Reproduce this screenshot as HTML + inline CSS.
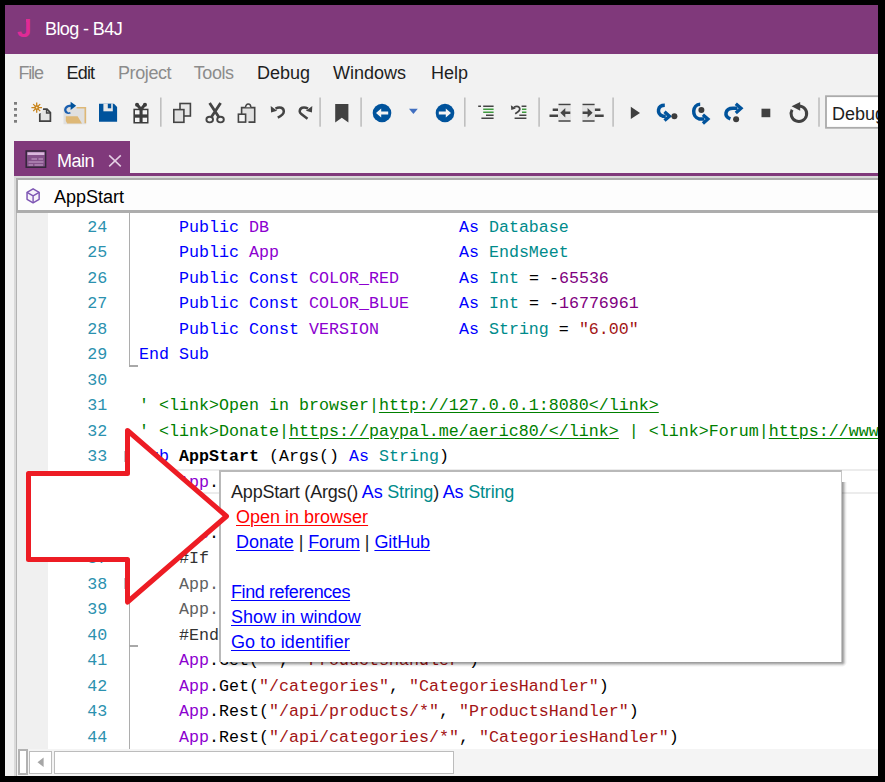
<!DOCTYPE html>
<html><head><meta charset="utf-8"><title>Blog - B4J</title>
<style>
html,body{margin:0;padding:0;background:#000;}
body{width:885px;height:782px;overflow:hidden;position:relative;font-family:"Liberation Sans",sans-serif;}
#win{position:absolute;left:5px;top:5px;width:873px;height:771px;background:#f2f2f2;overflow:hidden;}
.abs{position:absolute;}
.t{position:absolute;white-space:pre;font-size:18px;line-height:21px;color:#1e1e1e;}
#title{left:0;top:0;width:873px;height:49px;background:#80397b;}
.g{color:#8c8c8c;}
#tab{left:9px;top:136px;width:116px;height:33px;background:#80397b;}
#pline{left:9px;top:168px;width:864px;height:3px;background:#80397b;}
#frame{left:9px;top:171px;width:864px;height:600px;background:#dadada;}
#combo{left:11px;top:173px;width:862px;height:35px;background:#adadad;}
#comboin{left:13px;top:175px;width:860px;height:30px;background:#fdfdfd;}
#ed{left:12px;top:208px;width:861px;height:536px;background:#fff;overflow:hidden;}
#lb{left:11px;top:208px;width:1px;height:563px;background:#b4b4b4;}
#gut{left:0;top:0;width:31px;height:536px;background:#f0f0f0;}
.ln,.cl{position:absolute;white-space:pre;font-family:"Liberation Mono",monospace;font-size:16.667px;line-height:25.5px;height:25.5px;}
.ln{left:58.3px;width:32px;text-align:right;color:#2b91af;}
.cl{left:122px;color:#000;}
.k{color:#0000ff}.v{color:#8c00cf}.ty{color:#008b8b}.n{color:#800080}.s{color:#a31515}.c{color:#008000}.u{text-decoration:underline;text-underline-offset:2px}.d{color:#606060}.dd{color:#333}
b{font-weight:700;color:#000}
#hs{left:12px;top:744px;width:861px;height:27px;background:#f4f4f4;}
#pop{left:214px;top:465px;width:620px;height:189.5px;background:#fff;border:2px solid #b9b9b9;border-right:1px solid #c6c6c6;border-bottom:0;}
.pl{position:absolute;white-space:pre;font-size:18px;line-height:25px;height:25px;color:#1e1e1e;}
.pl a{color:#0000ff;text-decoration:underline;text-underline-offset:1.5px;text-decoration-thickness:1px}
.pl a.r{color:#ff0000}
</style></head><body>
<div id="win">
 <div id="title" class="abs"></div>
 <div class="t" style="left:12px;top:7.5px;font-size:26px;line-height:30px;font-weight:700;color:#df2a96">J</div>
 <div class="abs" style="left:10px;top:11px;width:11.2px;height:11px;background:#80397b"></div>
 <div class="t" style="left:40px;top:13.7px;color:#fff;letter-spacing:-0.6px">Blog - B4J</div>
 <!-- menu -->
 <div class="t g" style="left:13.5px;top:57.8px;letter-spacing:-1.2px">File</div>
 <div class="t" style="left:61.5px;top:57.8px;letter-spacing:-0.8px">Edit</div>
 <div class="t g" style="left:113px;top:57.8px;letter-spacing:-0.4px">Project</div>
 <div class="t g" style="left:188.7px;top:57.8px;letter-spacing:-0.4px">Tools</div>
 <div class="t" style="left:252px;top:57.8px">Debug</div>
 <div class="t" style="left:328px;top:57.8px">Windows</div>
 <div class="t" style="left:426px;top:57.8px">Help</div>
 <!-- toolbar placeholder -->
 <!-- tab -->
 <div id="tab" class="abs"></div>
 <div id="pline" class="abs"></div>
 <div class="t" style="left:52px;top:146px;color:#fff;letter-spacing:-0.5px">Main</div>
 <div id="frame" class="abs"></div>
 <div id="combo" class="abs"></div>
 <div id="comboin" class="abs"></div>
 <svg id="icons" class="abs" style="left:-5px;top:-5px" width="885" height="215" viewBox="0 0 885 215">
  <!-- grip -->
  <g fill="#7d7d7d"><rect x="14" y="102" width="3" height="2.7"/><rect x="14" y="108" width="3" height="2.7"/><rect x="14" y="114" width="3" height="2.7"/><rect x="14" y="120" width="3" height="2.7"/></g>
  <!-- new -->
  <path d="M39.8 109.2H47l3.4 3.4v8.6H39.8z" fill="#e4e4e4" stroke="#424242" stroke-width="1.7" stroke-linejoin="miter"/>
  <path d="M46.6 109.2v3.8h3.8" fill="none" stroke="#424242" stroke-width="1.5"/>
  <circle cx="36.7" cy="107.6" r="6.6" fill="#f2f2f2"/>
  <g stroke="#c8841c" stroke-width="1.3" fill="none"><path d="M31.4 107.6H42M36.7 102.4V112.8M33.2 104.1l7 7M40.2 104.1l-7 7"/></g>
  <circle cx="36.7" cy="107.6" r="2.4" fill="#c8841c"/><circle cx="36.7" cy="107.6" r="0.9" fill="#f6e2c0"/>
  <!-- open -->
  <rect x="63.5" y="107" width="22.8" height="17.3" fill="#e0e0e0"/>
  <path d="M76.6 107.8H85.3V123.2" fill="none" stroke="#deb877" stroke-width="1.6"/>
  <path d="M65.8 116.2H77.6L82 123.5H67.2L65.8 121z" fill="#deb877"/>
  <path d="M66.8 112.6c-3-2.6-1.6-6.8 4.6-6.9" fill="none" stroke="#1a5fb0" stroke-width="2.2"/>
  <path d="M70.6 101.8l5.6 4-5.6 4.2z" fill="#00539c"/>
  <path d="M66 112.2c1.2 1 3 1.2 4.4.6" fill="none" stroke="#1a5fb0" stroke-width="1.6"/>
  <!-- save -->
  <path d="M99 103.8H114L117.1 107V121.8H99z" fill="#00539c"/>
  <rect x="103.4" y="103.8" width="9.4" height="7.5" fill="#e8e8e8"/>
  <rect x="107.8" y="103.8" width="3.4" height="4.5" fill="#00539c"/>
  <!-- gift -->
  <rect x="133.4" y="108.7" width="15.1" height="14.8" fill="#3d3d3d"/>
  <g fill="#f4f4f4"><rect x="135" y="110.2" width="4.5" height="4.2"/><rect x="142.6" y="110.2" width="4.5" height="4.2"/><rect x="135" y="117.7" width="4.5" height="4.3"/><rect x="142.6" y="117.7" width="4.5" height="4.3"/></g>
  <path d="M141 109.5l-3.6-4.6M141 109.5l3.600-4.600" stroke="#3d3d3d" stroke-width="3" fill="none" stroke-linecap="round"/>
  <circle cx="137" cy="104.8" r="2" fill="#3d3d3d"/><circle cx="145" cy="104.8" r="2" fill="#3d3d3d"/>
  <!-- sep -->
  <g fill="#bfbfbf"><rect x="160" y="97.5" width="1.6" height="29.2"/><rect x="319.3" y="97.5" width="1.6" height="29.2"/><rect x="360.3" y="97.5" width="1.6" height="29.2"/><rect x="464" y="97.5" width="1.6" height="29.2"/><rect x="538.3" y="97.5" width="1.6" height="29.2"/><rect x="612.3" y="97.5" width="1.6" height="29.2"/><rect x="818.2" y="97.5" width="1.6" height="29.2"/></g>
  <!-- copy -->
  <rect x="180" y="103.5" width="10.4" height="12.5" fill="#e8e8e8" stroke="#444" stroke-width="1.6"/>
  <rect x="173.8" y="109.6" width="10.1" height="12.7" fill="#e2e2e2" stroke="#444" stroke-width="1.6"/>
  <!-- cut -->
  <g fill="none" stroke="#444" stroke-width="1.9"><path d="M209.600 103L218.800 117M220.600 103L211.400 117" stroke-width="2.800"/><ellipse cx="209.700" cy="119.600" rx="3.300" ry="2.800"/><ellipse cx="220.500" cy="119.600" rx="3.300" ry="2.800"/></g>
  <!-- paste -->
  <path d="M241.6 122.1V107.6H254.7V122.1H248.5" fill="#e2e2e2" stroke="#444" stroke-width="1.6"/>
  <path d="M245.6 107.2a2.6 3.2 0 0 1 5.2 0" fill="#f4f4f4" stroke="#444" stroke-width="1.5"/>
  <rect x="238.4" y="114.2" width="7.2" height="7.9" fill="#f4f4f4" stroke="#444" stroke-width="1.6"/>
  <!-- undo -->
  <path d="M275.5 108.6c4.5-2.6 8.300-0.600 8.300 2.800c0 2.500-2.500 4.400-6 6.300" fill="none" stroke="#444" stroke-width="2.5"/>
  <path d="M270.700 106.000l0.400 6.400 6.000-1.600z" fill="#444"/>
  <!-- redo -->
  <path d="M308 108.6c-4.500-2.600-8.300-0.600-8.300 2.800c0 1.000 0.600 1.800 1.600 2.600l6.200 4.800" fill="none" stroke="#444" stroke-width="2.5"/>
  <path d="M312.300 106.000l-0.400 6.400-6.000-1.600z" fill="#444"/>
  <!-- bookmark -->
  <path d="M335.200 104.100H348.400V122.600L341.800 117.700L335.200 122.600z" fill="#414141"/>
  <!-- back -->
  <circle cx="382" cy="113" r="9.300" fill="#00539c"/>
  <path d="M376 113l5.200-4.600v3.100h7v3h-7v3.100z" fill="#f4f4f4"/>
  <path d="M409 108.800h8.800l-4.400 5.200z" fill="#416fc0"/>
  <circle cx="445" cy="113" r="9.300" fill="#00539c"/>
  <path d="M451 113l-5.200-4.600v3.100h-7v3h7v3.100z" fill="#f4f4f4"/>
  <!-- comment -->
  <g stroke-width="1.600" fill="none"><path d="M478.200 106.200h2.800M483.200 106.200h10.400M486 115.300h7.600M481.400 118.300h12.200" stroke="#444"/><path d="M483.200 109.300h10.400M483.200 112.300h10.400" stroke="#3f9a3f"/></g>
  <!-- uncomment -->
  <g stroke-width="1.600" fill="none"><path d="M521.600 106.200h4.800M519.300 115.300h7.100M514.600 118.300h11.800" stroke="#444"/><path d="M522 109.300h4.400M522 112.300h4.400" stroke="#3f9a3f"/></g>
  <path d="M514 107.200c3.200-1.600 5.800-0.400 5.800 1.800c0 1.900-1.900 3.200-4.600 4.800" fill="none" stroke="#444" stroke-width="1.800"/>
  <path d="M510.900 105.200l0.400 4.800 4.500-1.500z" fill="#444"/>
  <!-- outdent -->
  <rect x="558" y="106" width="13" height="14" fill="#e4e4e4"/>
  <g stroke="#444" fill="none"><path d="M558.500 104.600h12.100M558.500 121.100h12.100" stroke-width="1.500"/><path d="M552.700 109.800h5.300M549.500 115.700h8.500" stroke-width="2.500"/></g>
  <path d="M560.300 112.700l5-4.700v3.400h5v2.600h-5v3.400z" fill="#444"/>
  <!-- indent -->
  <rect x="582" y="106" width="13" height="14" fill="#e4e4e4"/>
  <g stroke="#444" fill="none"><path d="M582.500 104.600h12.100M582.500 121.100h12.100" stroke-width="1.500"/><path d="M594.900 109.800h5.500M594.900 115.700h8.800" stroke-width="2.500"/></g>
  <path d="M592.600 112.700l-5-4.700v3.400h-5v2.600h5v3.400z" fill="#444"/>
  <!-- play -->
  <path d="M630.800 106.800V119L640 112.900z" fill="#3f3f3f"/>
  <!-- step in -->
  <path d="M664.800 105.300c-7.400 0-8.600 8.200-2 10.900h3" fill="none" stroke="#00539c" stroke-width="3.5"/>
  <path d="M664.500 111.800l5 4.400-5 4.400" fill="none" stroke="#00539c" stroke-width="3.3" stroke-linejoin="miter"/>
  <circle cx="674.400" cy="116.200" r="3" fill="#3d3d3d"/>
  <!-- step over -->
  <path d="M700.200 104.200c-8 0.200-9 12.800-0.800 14.900h5" fill="none" stroke="#00539c" stroke-width="3.5"/>
  <path d="M702.900 114.700l5 4.400-5 4.400" fill="none" stroke="#00539c" stroke-width="3.3"/>
  <circle cx="701.400" cy="110" r="3" fill="#3d3d3d"/>
  <!-- step out -->
  <path d="M737.500 108.300h-4.500c-8 0-9.600 8-2.600 10.500" fill="none" stroke="#00539c" stroke-width="3.5"/>
  <path d="M735.800 103.700l5.200 4.600-5.200 4.600" fill="none" stroke="#00539c" stroke-width="3.3"/>
  <circle cx="736.100" cy="119.200" r="3" fill="#3d3d3d"/>
  <!-- stop -->
  <rect x="761.500" y="108.700" width="8.800" height="8.500" fill="#414141"/>
  <!-- restart -->
  <path d="M799.600 105.900A7.800 7.800 0 1 1 792.100 109.800" fill="none" stroke="#414141" stroke-width="3"/>
  <path d="M791.600 106.300l8.600-4.400v8.800z" fill="#414141"/>
  <!-- combo -->
  <rect x="826" y="96.200" width="60" height="31.600" fill="#fff" stroke="#ababab" stroke-width="1.800"/>
  <!-- tab icon -->
  <rect x="26.200" y="151" width="19.400" height="16.200" fill="#85528a" stroke="#33263a" stroke-width="1.500"/>
  <rect x="27.500" y="152.300" width="16.800" height="2.700" fill="#d9b8dc"/>
  <g stroke="#c9a3cc" stroke-width="1.200"><path d="M31.500 159h5.500M38.500 159h4.500M28.500 162h15M28.500 165h4.500M34.500 165h8.500"/></g>
  <path d="M109.200 155.400l11.600 11M120.800 155.400l-11.600 11" stroke="#e4cfe4" stroke-width="1.500" fill="none"/>
  <polygon points="33.10,188.80 39.16,192.30 39.16,199.30 33.10,202.80 27.04,199.30 27.04,192.30" fill="#f6f2fa" stroke="#7d55b3" stroke-width="1.45" stroke-linejoin="round"/>
  <path d="M33.1 195.8V202.8M33.1 195.8L39.16 192.30M33.1 195.8L27.04 192.30" stroke="#7d55b3" stroke-width="1.4" fill="none"/>
 </svg>
 <div class="t" style="left:827px;top:98.6px;color:#1e1e1e">Debug</div>
 <div class="t" style="left:49px;top:182.1px;color:#000">AppStart</div>
 <div id="lb" class="abs"></div>
 <div id="ed" class="abs">
  <div id="gut" class="abs"></div>
  <div class="abs" style="left:112px;top:0;width:1.4px;height:153.5px;background:#adadad"></div>
  <div class="abs" style="left:112px;top:152px;width:8.5px;height:1.5px;background:#a8a8a8"></div>
  <div class="abs" style="left:112px;top:243px;width:1.4px;height:293px;background:#adadad"></div>
  <div class="abs" style="left:112px;top:432px;width:8.5px;height:1.5px;background:#a8a8a8"></div>
  <div class="abs" style="left:107px;top:237.5px;width:11px;height:11px;box-sizing:border-box;border:1px solid #c4c4c4;background:#fff"></div>
  <div class="abs" style="left:107px;top:365px;width:11px;height:11px;box-sizing:border-box;border:1px solid #c4c4c4;background:#fff"></div>
  <div class="abs" style="left:114px;top:256px;width:747px;height:25px;box-sizing:border-box;border-top:2.6px solid #ececec;border-bottom:2.6px solid #ececec"></div>
  <div id="code">
  <div class="ln" style="top:1.9px">24</div><div class="cl" style="top:1.9px">    <span class="k">Public</span> <span class="v">DB</span>                   <span class="k">As</span> <span class="ty">Database</span></div>
  <div class="ln" style="top:27.4px">25</div><div class="cl" style="top:27.4px">    <span class="k">Public</span> <span class="v">App</span>                  <span class="k">As</span> <span class="ty">EndsMeet</span></div>
  <div class="ln" style="top:52.9px">26</div><div class="cl" style="top:52.9px">    <span class="k">Public</span> <span class="k">Const</span> <span class="v">COLOR_RED</span>      <span class="k">As</span> <span class="ty">Int</span> = -<span class="n">65536</span></div>
  <div class="ln" style="top:78.4px">27</div><div class="cl" style="top:78.4px">    <span class="k">Public</span> <span class="k">Const</span> <span class="v">COLOR_BLUE</span>     <span class="k">As</span> <span class="ty">Int</span> = -<span class="n">16776961</span></div>
  <div class="ln" style="top:103.9px">28</div><div class="cl" style="top:103.9px">    <span class="k">Public</span> <span class="k">Const</span> <span class="v">VERSION</span>        <span class="k">As</span> <span class="ty">String</span> = <span class="s">"6.00"</span></div>
  <div class="ln" style="top:129.4px">29</div><div class="cl" style="top:129.4px"><span class="k">End Sub</span></div>
  <div class="ln" style="top:154.9px">30</div><div class="cl" style="top:154.9px"></div>
  <div class="ln" style="top:180.4px">31</div><div class="cl" style="top:180.4px"><span class="c">' &lt;link&gt;Open in browser|<span class="u">http://127.0.0.1:8080&lt;/link&gt;</span></span></div>
  <div class="ln" style="top:205.9px">32</div><div class="cl" style="top:205.9px"><span class="c">' &lt;link&gt;Donate|<span class="u">https://paypal.me/aeric80/&lt;/link&gt;</span> | &lt;link&gt;Forum|<span class="u">https://www.b4x.com/android/forum/</span></span></div>
  <div class="ln" style="top:231.4px">33</div><div class="cl" style="top:231.4px"><span class="k">Sub</span> <b>AppStart</b> (Args() <span class="k">As</span> <span class="ty">String</span>)</div>
  <div class="ln" style="top:256.9px">34</div><div class="cl" style="top:256.9px">    <span class="v">App</span>.Initialize</div>
  <div class="ln" style="top:282.4px">35</div><div class="cl" style="top:282.4px">    <span class="v">App</span>.Port = <span class="n">8080</span></div>
  <div class="ln" style="top:307.9px">36</div><div class="cl" style="top:307.9px">    <span class="v">App</span>.Title = <span class="s">"Blog"</span></div>
  <div class="ln" style="top:333.4px">37</div><div class="cl" style="top:333.4px">    <span class="dd">#If RELEASE</span></div>
  <div class="ln" style="top:358.9px">38</div><div class="cl" style="top:358.9px">    <span class="d">App.EnableSSL = True</span></div>
  <div class="ln" style="top:384.4px">39</div><div class="cl" style="top:384.4px">    <span class="d">App.EnableHelp = False</span></div>
  <div class="ln" style="top:409.9px">40</div><div class="cl" style="top:409.9px">    <span class="dd">#End If</span></div>
  <div class="ln" style="top:435.4px">41</div><div class="cl" style="top:435.4px">    <span class="v">App</span>.Get(<span class="s">""</span>, <span class="s">"ProductsHandler"</span>)</div>
  <div class="ln" style="top:460.9px">42</div><div class="cl" style="top:460.9px">    <span class="v">App</span>.Get(<span class="s">"/categories"</span>, <span class="s">"CategoriesHandler"</span>)</div>
  <div class="ln" style="top:486.4px">43</div><div class="cl" style="top:486.4px">    <span class="v">App</span>.Rest(<span class="s">"/api/products/*"</span>, <span class="s">"ProductsHandler"</span>)</div>
  <div class="ln" style="top:511.9px">44</div><div class="cl" style="top:511.9px">    <span class="v">App</span>.Rest(<span class="s">"/api/categories/*"</span>, <span class="s">"CategoriesHandler"</span>)</div>
  </div>
 </div>
 <div id="hs" class="abs">
  <div class="abs" style="left:1px;top:0;width:10px;height:26px;box-sizing:border-box;border:2px solid #b2b2b2;background:#fff"></div>
  <div class="abs" style="left:11.5px;top:2px;width:23.5px;height:23px;box-sizing:border-box;border:1.5px solid #bcbcbc;background:#fff"></div>
  <svg class="abs" style="left:11.5px;top:2px" width="24" height="23"><polygon points="8.5,11.2 14.6,6.5 14.6,16" fill="#a6a6a6"/></svg>
  <div class="abs" style="left:37px;top:2px;width:400px;height:23px;box-sizing:border-box;border:1.5px solid #bcbcbc;background:#fff"></div>
 </div>
 <div class="abs" style="left:837px;top:477px;width:5px;height:179.500px;background:linear-gradient(to right,rgba(0,0,0,.42),rgba(0,0,0,.3) 30%,rgba(0,0,0,.1) 65%,rgba(0,0,0,0))"></div>
 <div class="abs" style="left:224px;top:656.500px;width:613px;height:5px;background:linear-gradient(to bottom,rgba(0,0,0,.42),rgba(0,0,0,.3) 30%,rgba(0,0,0,.1) 65%,rgba(0,0,0,0))"></div>
 <div class="abs" style="left:837px;top:656.500px;width:5px;height:5px;background:radial-gradient(circle 5px at 0 0,rgba(0,0,0,.42),rgba(0,0,0,.3) 30%,rgba(0,0,0,.1) 65%,rgba(0,0,0,0) 100%)"></div>
 <div class="abs" style="left:216px;top:656.500px;width:8px;height:5px;background:linear-gradient(to right,rgba(0,0,0,0),rgba(0,0,0,.3));-webkit-mask-image:linear-gradient(to bottom,#000,transparent);mask-image:linear-gradient(to bottom,#000,transparent)"></div>
 <div id="pop" class="abs">
  <div class="pl" style="left:10px;top:8.3px;letter-spacing:-0.19px">AppStart (Args() <span class="k">As</span> <span class="ty">String</span>) <span class="k">As</span> <span class="ty">String</span></div>
  <div class="pl" style="left:15px;top:33.3px"><a class="r">Open in browser</a></div>
  <div class="pl" style="left:15px;top:58.3px;letter-spacing:-0.06px"><a>Donate</a> | <a>Forum</a> | <a>GitHub</a></div>
  <div class="pl" style="left:10px;top:108.3px;letter-spacing:-0.4px"><a>Find references</a></div>
  <div class="pl" style="left:10px;top:133.3px;letter-spacing:0.05px"><a>Show in window</a></div>
  <div class="pl" style="left:10px;top:158.3px;letter-spacing:0.12px"><a>Go to identifier</a></div>
 </div>

 <svg class="abs" style="left:-5px;top:-5px" width="885" height="782" viewBox="0 0 885 782">
  <polygon points="28.5,473.5 127.5,473.5 127.5,430.5 226.5,516.25 127.5,602 127.5,559.5 28.5,559.5" fill="#fff" stroke="#ed1c24" stroke-width="5" stroke-linejoin="round"/>
 </svg>
</div>
</body></html>
